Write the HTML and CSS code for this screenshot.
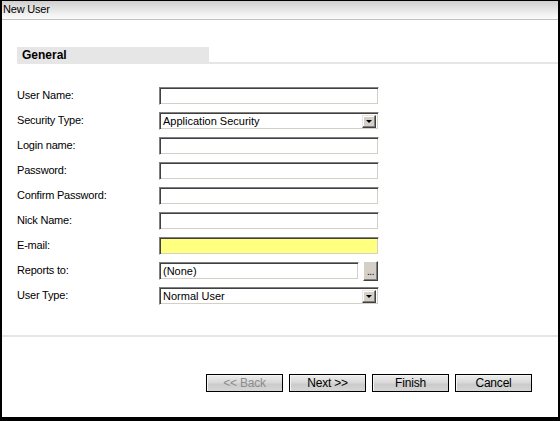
FILE: index.html
```html
<!DOCTYPE html>
<html>
<head>
<meta charset="utf-8">
<title>New User</title>
<link rel="stylesheet" href="styles.css">
</head>
<body>
<div class="window">
  <div class="titlebar">New User</div>
  <div class="section">
    <div class="tab">General</div>
    <div class="tab-line"></div>
  </div>
  <div class="form">
    <div class="row"><span class="label">User Name:</span><div class="field"></div></div>
    <div class="row"><span class="label">Security Type:</span><div class="field select"><span class="value">Application Security</span><span class="arrow"><span class="tri"></span></span></div></div>
    <div class="row"><span class="label">Login name:</span><div class="field"></div></div>
    <div class="row"><span class="label">Password:</span><div class="field"></div></div>
    <div class="row"><span class="label">Confirm Password:</span><div class="field"></div></div>
    <div class="row"><span class="label">Nick Name:</span><div class="field"></div></div>
    <div class="row"><span class="label">E-mail:</span><div class="field required"></div></div>
    <div class="row"><span class="label">Reports to:</span><div class="lookup"><div class="field short"><span class="value">(None)</span></div><span class="dots">...</span></div></div>
    <div class="row"><span class="label">User Type:</span><div class="field select"><span class="value">Normal User</span><span class="arrow"><span class="tri"></span></span></div></div>
  </div>
  <div class="separator"></div>
  <div class="buttons">
    <span class="btn disabled">&lt;&lt; Back</span>
    <span class="btn">Next &gt;&gt;</span>
    <span class="btn">Finish</span>
    <span class="btn">Cancel</span>
  </div>
</div>
</body>
</html>
```

FILE: styles.css
```css
html, body {
  margin: 0;
  padding: 0;
  background: #ffffff;
}

body {
  font-family: "Liberation Sans", Arial, sans-serif;
  font-size: 11px;
  color: #000000;
}

.window {
  width: 560px;
  height: 421px;
  box-sizing: border-box;
  border-style: solid;
  border-color: #000000;
  border-width: 1px 2px 4px 2px;
  background: #ffffff;
  display: flex;
  flex-direction: column;
}

.titlebar {
  height: 18px;
  line-height: 17px;
  padding-left: 1px;
  border-bottom: 1px solid #c0c0c0;
  background: linear-gradient(#cfcfcf, #f2f2f2 75%, #fbfbfb);
  letter-spacing: -0.2px;
}

.section {
  display: flex;
  align-items: flex-end;
  margin-top: 27px;
  padding-left: 15px;
}

.tab {
  width: 192px;
  height: 17px;
  box-sizing: border-box;
  padding-left: 5px;
  line-height: 17px;
  background: #e6e6e6;
  font-weight: bold;
  font-size: 12px;
}

.tab-line {
  flex: 1;
  height: 2px;
  background: #e6e6e6;
}

.form {
  margin-top: 23px;
  padding-left: 15px;
  display: flex;
  flex-direction: column;
}

.row {
  height: 25px;
  display: flex;
  align-items: flex-start;
}

.label {
  width: 142px;
  height: 18px;
  line-height: 17px;
  letter-spacing: -0.2px;
}

.field {
  width: 220px;
  height: 18px;
  box-sizing: border-box;
  border-style: solid;
  border-width: 1px;
  border-color: #808080 #ffffff #ffffff #808080;
  box-shadow: inset 1px 1px 0 #404040, inset -1px -1px 0 #d4d0c8;
  background: #ffffff;
  display: flex;
  align-items: center;
  padding-left: 3px;
}

.field.required {
  background: #ffff80;
}

.field.short {
  width: 200px;
}

.value {
  line-height: 14px;
}

.select {
  justify-content: space-between;
  padding-right: 2px;
}

.arrow {
  width: 14px;
  height: 13px;
  box-sizing: border-box;
  background: #d4d0c8;
  border-style: solid;
  border-width: 1px;
  border-color: #e8e6e0 #404040 #404040 #e8e6e0;
  box-shadow: inset -1px -1px 0 #808080, inset 1px 1px 0 #ffffff;
  display: flex;
  align-items: center;
  justify-content: center;
}

.tri {
  width: 0;
  height: 0;
  border-left: 3px solid transparent;
  border-right: 3px solid transparent;
  border-top: 3px solid #000000;
  margin-top: 1px;
}

.lookup {
  display: flex;
  align-items: flex-start;
  gap: 4px;
}

.dots {
  width: 15px;
  height: 20px;
  margin-top: -1px;
  box-sizing: border-box;
  background: #d4d0c8;
  border-style: solid;
  border-width: 1px;
  border-color: #ffffff #404040 #404040 #ffffff;
  box-shadow: inset -1px -1px 0 #808080;
  font-size: 10px;
  line-height: 20px;
  text-align: center;
  letter-spacing: -0.5px;
}

.separator {
  margin-top: 23px;
  height: 2px;
  background: #e6e6e6;
}

.buttons {
  margin-top: 37px;
  padding-right: 26px;
  display: flex;
  justify-content: flex-end;
  gap: 6px;
}

.btn {
  width: 77px;
  height: 18px;
  box-sizing: border-box;
  border: 1px solid #000000;
  box-shadow: inset 1px 1px 0 #f4f4f4;
  background: linear-gradient(#eeeeee, #dadada 45%, #cbcbcb 60%, #d6d6d6);
  text-align: center;
  font-size: 12px;
  line-height: 16px;
  letter-spacing: -0.2px;
}

.btn.disabled {
  color: #8c8c8c;
}
```
